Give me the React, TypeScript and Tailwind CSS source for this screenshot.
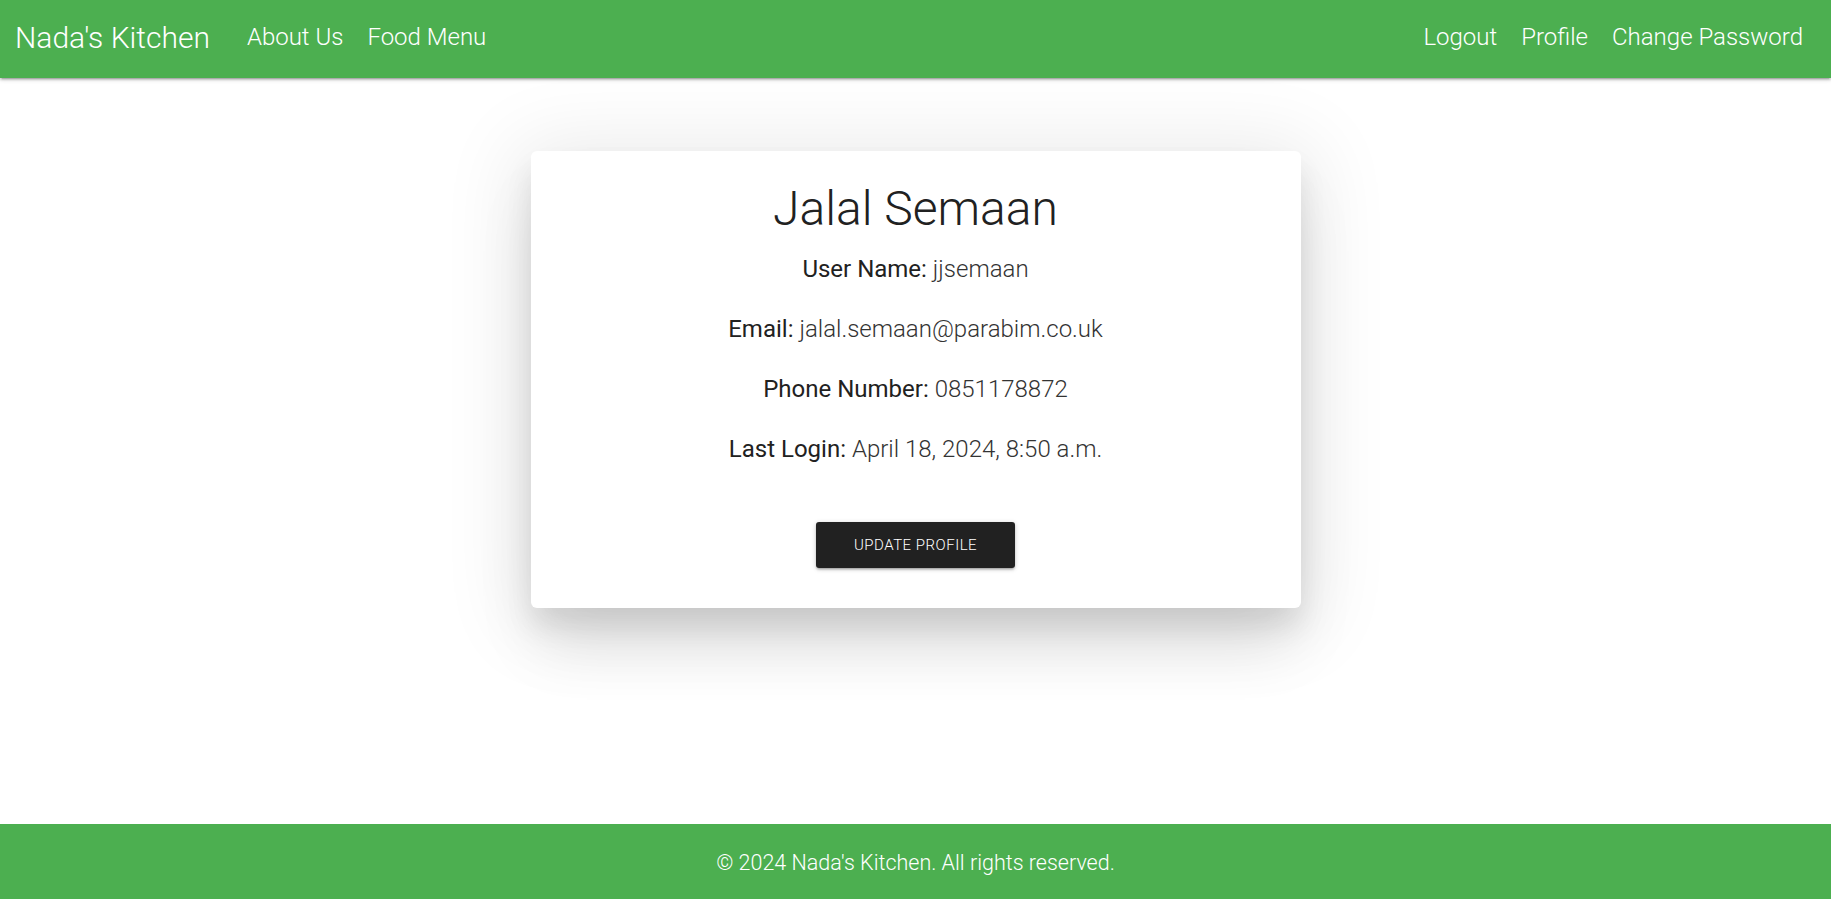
import React from "react";

export default function App() {
  const rows: [string, string][] = [
    ["Email:", "jalal.semaan@parabim.co.uk"],
    ["Phone Number:", "0851178872"],
    ["Last Login:", "April 18, 2024, 8:50 a.m."],
  ];
  return (
    <div
      className="min-h-screen flex flex-col bg-white text-[#212121]"
      style={{ fontFamily: "Roboto, 'Noto Sans', sans-serif" }}
    >
      <nav className="h-[78px] bg-[#4caf50] flex items-center justify-between text-white font-light pb-[4px] shadow-[0_2px_2px_0_rgba(0,0,0,0.14),0_3px_1px_-2px_rgba(0,0,0,0.12),0_1px_5px_0_rgba(0,0,0,0.2)] relative z-10">
        <div className="flex items-center">
          <a className="pl-[15px] pr-[25px] text-[30px]">Nada's Kitchen</a>
          <a className="px-[12px] text-[24px]">About Us</a>
          <a className="px-[12px] text-[24px]">Food Menu</a>
        </div>
        <div className="flex items-center pr-[16px]">
          <a className="px-[12px] text-[24px]">Logout</a>
          <a className="px-[12px] text-[24px]">Profile</a>
          <a className="px-[12px] text-[24px]">Change Password</a>
        </div>
      </nav>

      <main className="flex-1 flex justify-center items-start pt-[73px]">
        <div className="w-[770px] bg-white rounded-[6px] flex flex-col items-center pt-[30px] pb-[40px] shadow-[0_18px_28px_0_rgba(0,0,0,0.08),0_8px_80px_14px_rgba(0,0,0,0.09),0_44px_60px_-8px_rgba(0,0,0,0.1)]">
          <h3 className="text-[48px] leading-[56px] font-light text-[#212121]">Jalal Semaan</h3>
          <div className="mt-[14px] flex flex-col items-center gap-[24px] text-[24px] leading-[36px]">
            <p>
              <span className="font-normal text-[#212121]">User Name:</span>{" "}
              <span className="font-light text-[#333]">jjsemaan</span>
            </p>
            {rows.map(([k, v]) => (
              <p key={k}>
                <span className="font-normal text-[#212121]">{k}</span>{" "}
                <span className="font-light text-[#333]">{v}</span>
              </p>
            ))}
          </div>
          <button className="mt-[55px] h-[46px] px-[38px] bg-[#212121] text-white text-[15px] font-light tracking-[0.5px] rounded-[3px] shadow-[0_2px_2px_0_rgba(0,0,0,0.14),0_3px_1px_-2px_rgba(0,0,0,0.12),0_1px_5px_0_rgba(0,0,0,0.2)]">
            UPDATE PROFILE
          </button>
        </div>
      </main>

      <footer className="h-[75px] bg-[#4caf50] flex items-center justify-center text-white font-light text-[21.5px] pt-[4px]">
        © 2024 Nada's Kitchen. All rights reserved.
      </footer>
    </div>
  );
}
